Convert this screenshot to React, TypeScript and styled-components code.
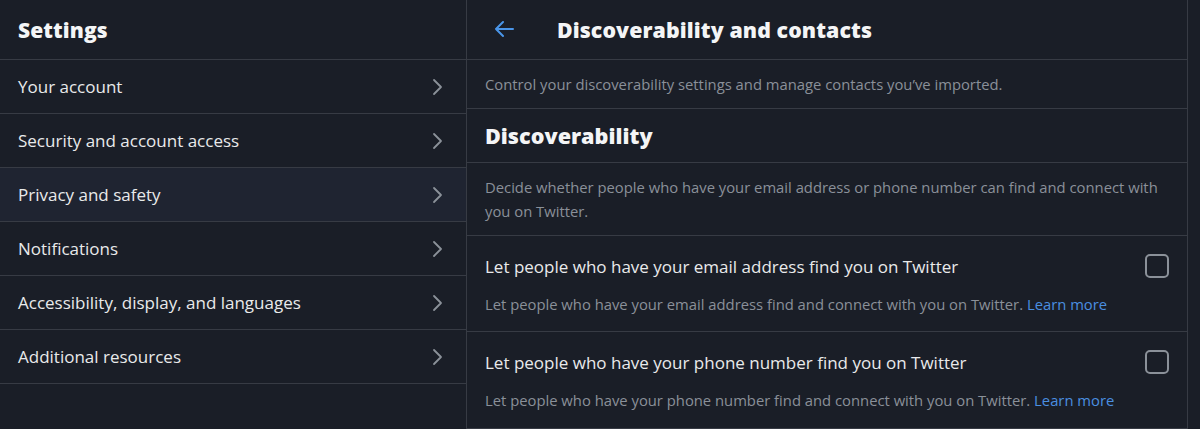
import React from "react";
import styled, { createGlobalStyle } from "styled-components";

const Global = createGlobalStyle`
  html, body { margin: 0; padding: 0; background: #1a1e27; }
  body { font-family: "Open Sans", "Noto Sans", sans-serif; color: #e7e9ea; }
  * { box-sizing: border-box; }
`;

const Page = styled.div`
  display: flex;
  width: 1200px;
  height: 429px;
  overflow: hidden;
  background: #1a1e27;
`;

const LeftPanel = styled.aside`
  width: 467px;
  flex-shrink: 0;
  border-right: 1px solid #373b44;
  display: flex;
  flex-direction: column;
`;

const RightPanel = styled.main`
  width: 721px;
  flex-shrink: 0;
  border-right: 1px solid #373b44;
  display: flex;
  flex-direction: column;
`;

const Header = styled.header`
  height: 60px;
  display: flex;
  align-items: center;
  border-bottom: 1px solid #373b44;
  padding-left: 18px;
`;

const Title = styled.h1<{ $size?: number }>`
  margin: 0;
  font-size: ${(p) => p.$size ?? 21}px;
  font-weight: 800;
  color: #f4f5f6;
  letter-spacing: 0.1px;
`;

const NavRow = styled.div<{ $active?: boolean }>`
  height: 54px;
  display: flex;
  align-items: center;
  justify-content: space-between;
  padding: 0 22px 0 18px;
  border-bottom: 1px solid #373b44;
  background: ${(p) => (p.$active ? "#1f2431" : "transparent")};
  font-size: 17px;
  color: #e9eaeb;
`;

const Chevron = () => (
  <svg width="14" height="18" viewBox="0 0 14 18">
    <path d="M4 2 L11 9 L4 16" fill="none" stroke="#8b9199" strokeWidth="1.8" strokeLinecap="round" strokeLinejoin="round" />
  </svg>
);

const BackButton = styled.div`
  width: 40px;
  display: flex;
  align-items: center;
  margin-left: 8px;
  margin-right: 24px;
`;

const BackArrow = () => (
  <svg width="22" height="18" viewBox="0 0 22 18">
    <path d="M20 9 H3 M10 2 L3 9 L10 16" fill="none" stroke="#4a95e8" strokeWidth="2" strokeLinecap="round" strokeLinejoin="round" />
  </svg>
);

const Section = styled.div<{ $h: number }>`
  min-height: ${(p) => p.$h}px;
  display: flex;
  align-items: center;
  border-bottom: 1px solid #373b44;
  padding: 0 18px;
`;

const Muted = styled.p`
  margin: 0;
  font-size: 14.8px;
  line-height: 24px;
  color: #8a9099;
`;

const SectionTitle = styled.h2`
  margin: 0;
  font-size: 21.6px;
  font-weight: 800;
  color: #f4f5f6;
`;

const Option = styled.div`
  height: 97px;
  display: flex;
  flex-direction: column;
  justify-content: center;
  gap: 13px;
  border-bottom: 1px solid #373b44;
  padding: 3px 18px 0 18px;
`;

const OptionTop = styled.div`
  display: flex;
  align-items: center;
  justify-content: space-between;
  font-size: 17px;
  color: #e9eaeb;
  line-height: 24px;
`;

const Check = styled.div`
  width: 24px;
  height: 24px;
  border: 2px solid #8b9199;
  border-radius: 5px;
  margin-top: -2px;
`;

const Link = styled.a`
  color: #4a8fe0;
  text-decoration: none;
`;

const navItems = [
  "Your account",
  "Security and account access",
  "Privacy and safety",
  "Notifications",
  "Accessibility, display, and languages",
  "Additional resources",
];

const options = [
  {
    title: "Let people who have your email address find you on Twitter",
    desc: "Let people who have your email address find and connect with you on Twitter.",
  },
  {
    title: "Let people who have your phone number find you on Twitter",
    desc: "Let people who have your phone number find and connect with you on Twitter.",
  },
];

export default function App() {
  return (
    <>
      <Global />
      <Page>
        <LeftPanel>
          <Header>
            <Title>Settings</Title>
          </Header>
          {navItems.map((item, i) => (
            <NavRow key={item} $active={i === 2}>
              <span>{item}</span>
              <Chevron />
            </NavRow>
          ))}
        </LeftPanel>
        <RightPanel>
          <Header>
            <BackButton>
              <BackArrow />
            </BackButton>
            <Title $size={21.3}>Discoverability and contacts</Title>
          </Header>
          <Section $h={49}>
            <Muted>Control your discoverability settings and manage contacts you’ve imported.</Muted>
          </Section>
          <Section $h={54}>
            <SectionTitle>Discoverability</SectionTitle>
          </Section>
          <Section $h={73}>
            <Muted>
              Decide whether people who have your email address or phone number can find and connect with you on Twitter.
            </Muted>
          </Section>
          {options.map((o) => (
            <Option key={o.title}>
              <OptionTop>
                <span>{o.title}</span>
                <Check />
              </OptionTop>
              <Muted>
                {o.desc} <Link href="#">Learn more</Link>
              </Muted>
            </Option>
          ))}
        </RightPanel>
      </Page>
    </>
  );
}
